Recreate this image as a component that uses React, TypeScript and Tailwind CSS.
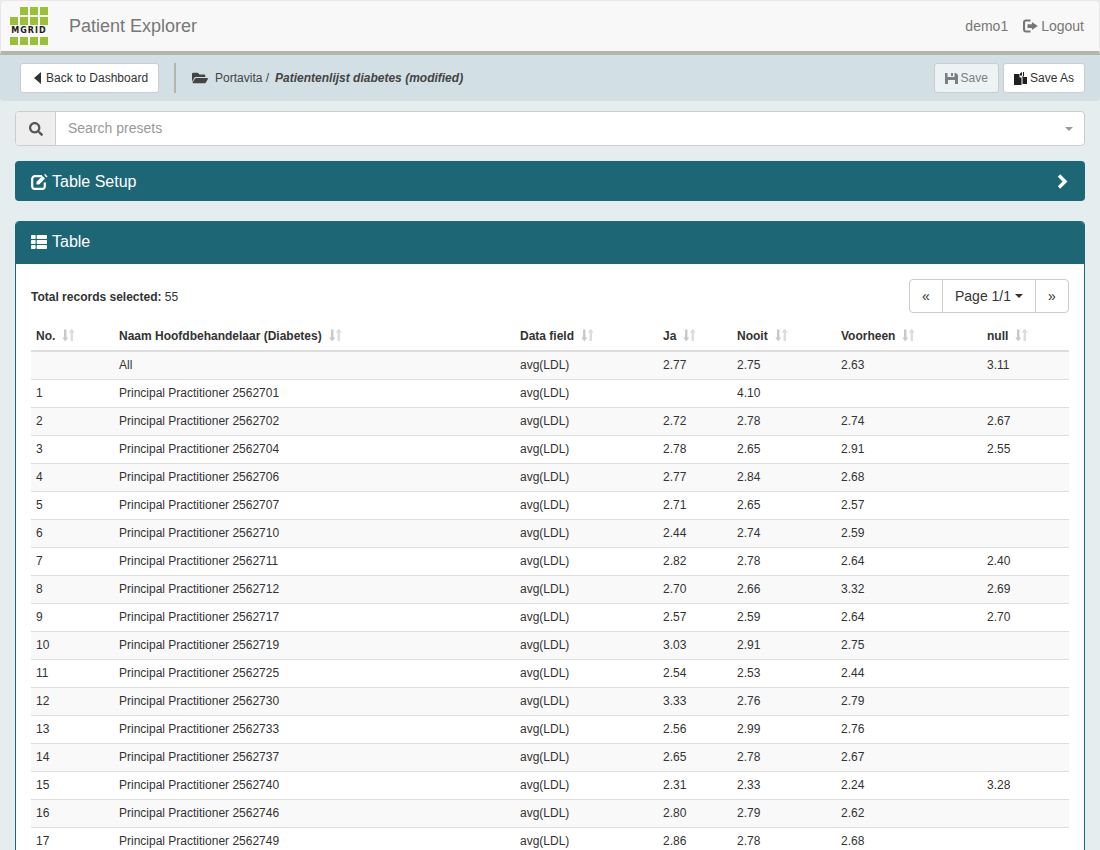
import type { ReactNode } from 'react'
import { FaFolderOpen, FaSearch, FaThList } from 'react-icons/fa'

type Row = [string, string, string, string, string, string]

const rows: Row[] = [
  ['', 'All', '2.77', '2.75', '2.63', '3.11'],
  ['1', 'Principal Practitioner 2562701', '', '4.10', '', ''],
  ['2', 'Principal Practitioner 2562702', '2.72', '2.78', '2.74', '2.67'],
  ['3', 'Principal Practitioner 2562704', '2.78', '2.65', '2.91', '2.55'],
  ['4', 'Principal Practitioner 2562706', '2.77', '2.84', '2.68', ''],
  ['5', 'Principal Practitioner 2562707', '2.71', '2.65', '2.57', ''],
  ['6', 'Principal Practitioner 2562710', '2.44', '2.74', '2.59', ''],
  ['7', 'Principal Practitioner 2562711', '2.82', '2.78', '2.64', '2.40'],
  ['8', 'Principal Practitioner 2562712', '2.70', '2.66', '3.32', '2.69'],
  ['9', 'Principal Practitioner 2562717', '2.57', '2.59', '2.64', '2.70'],
  ['10', 'Principal Practitioner 2562719', '3.03', '2.91', '2.75', ''],
  ['11', 'Principal Practitioner 2562725', '2.54', '2.53', '2.44', ''],
  ['12', 'Principal Practitioner 2562730', '3.33', '2.76', '2.79', ''],
  ['13', 'Principal Practitioner 2562733', '2.56', '2.99', '2.76', ''],
  ['14', 'Principal Practitioner 2562737', '2.65', '2.78', '2.67', ''],
  ['15', 'Principal Practitioner 2562740', '2.31', '2.33', '2.24', '3.28'],
  ['16', 'Principal Practitioner 2562746', '2.80', '2.79', '2.62', ''],
  ['17', 'Principal Practitioner 2562749', '2.86', '2.78', '2.68', ''],
]

const columns = ['No.', 'Naam Hoofdbehandelaar (Diabetes)', 'Data field', 'Ja', 'Nooit', 'Voorheen', 'null']

const LogoRow = ({ count }: { count: number }) => (
  <div className="flex justify-end gap-[2px]">
    {Array.from({ length: count }, (_, i) => (
      <span key={i} className="h-[8px] w-[8px] bg-[#9bbf35]" />
    ))}
  </div>
)

const Logo = () => (
  <div className="flex w-[38px] flex-col gap-[2px]">
    <LogoRow count={3} />
    <LogoRow count={4} />
    <div className="h-[8px] text-center font-['DejaVu_Sans'] text-[8px] font-bold leading-[8px] tracking-[1px] text-[#1c1c1c]">
      MGRID
    </div>
    <LogoRow count={4} />
  </div>
)

const LogoutIcon = () => (
  <svg viewBox="0 0 16 14" className="h-[14px] w-[15px]" fill="currentColor" aria-hidden="true">
    <path d="M3 0h5v2.2H3.4C2.7 2.2 2.2 2.7 2.2 3.4v7.2c0 .7.5 1.2 1.2 1.2H8V14H3c-1.7 0-3-1.3-3-3V3c0-1.7 1.3-3 3-3z" />
    <path d="M9.5 2.8 15.8 7l-6.3 4.2V9H4.8V5h4.7z" />
  </svg>
)

const SaveIcon = () => (
  <svg viewBox="0 0 13 13" className="h-[13px] w-[13px]" fill="currentColor" aria-hidden="true">
    <path fillRule="evenodd" d="M0 1h2.5v4h7V1H11l2 2v9H0zM3 8v4h7V8z" />
    <path d="M6 1h2v3H6z" />
  </svg>
)

const SaveAsIcon = () => (
  <svg viewBox="0 0 13 13" className="h-[13px] w-[13px]" fill="#231f20" aria-hidden="true">
    <path d="M0 2h5.5v3.5H7.5V13H0z" />
    <path d="M6 1.5 8 0v3.5H6zM9 0h1v4.5H8V4h1zM8.5 5H13v7H8.5z" />
  </svg>
)

const EditIcon = () => (
  <svg viewBox="0 0 17 16" className="h-[16px] w-[17px]" fill="none" aria-hidden="true">
    <path d="M11 2.2H3.8C2.4 2.2 1.2 3.4 1.2 4.8v7.4c0 1.4 1.2 2.6 2.6 2.6h7.4c1.4 0 2.6-1.2 2.6-2.6V8.5" stroke="white" strokeWidth="2.2" />
    <path d="M5.5 7.8 11.5 2 14 4.5 8.2 10.5H5.5z" fill="white" />
    <path d="M13 .8 14.2 0 16.6 2.4 15.4 3.6z" fill="white" />
  </svg>
)

const SortIcon = () => (
  <svg viewBox="0 0 14 14" className="ml-[7px] inline-block h-[14px] w-[13px] align-[-2px]" aria-hidden="true">
    <path d="M2.2 1h2.6v8.6h2L3.5 13.8.2 9.6h2z" fill="#c8c8cb" />
    <path d="M10.5.2 13.8 4.4h-2V13.4H9.2V4.4h-2z" fill="#dcdce0" />
  </svg>
)

const ToolbarButton = ({ children, disabled, className }: { children: ReactNode; disabled?: boolean; className?: string }) => (
  <button
    className={`flex h-[30px] items-center rounded-[3px] border border-[#ccc] text-[12px] ${
      disabled ? 'bg-[#edf3f4] text-[#7c7f80]' : 'bg-white text-[#333]'
    } ${className ?? ''}`}
  >
    {children}
  </button>
)

const App = () => (
  <div className="h-[850px] overflow-hidden bg-[#e6edef] font-['Liberation_Sans',sans-serif] text-[12px] text-[#333]">
    <header className="flex h-[55px] items-center justify-between rounded-t-[4px] border-x border-t border-b-[4px] border-x-[#e7e7e7] border-t-[#e7e7e7] border-b-[#b3b7a9] bg-[#f8f8f8] pl-[9px] pr-[15px]">
      <div className="flex items-center">
        <Logo />
        <span className="ml-[21px] text-[18px] text-[#777]">Patient Explorer</span>
      </div>
      <div className="flex items-center text-[14px] text-[#777]">
        <span>demo1</span>
        <span className="ml-[15px] flex items-center gap-[3px]">
          <LogoutIcon />
          Logout
        </span>
      </div>
    </header>

    <div className="flex h-[46px] items-center rounded-b-[4px] bg-[#d2e0e5] pl-[20px] pr-[15px]">
      <ToolbarButton className="pl-[13px] pr-[10px]">
        <svg viewBox="0 0 7 12" className="mr-[5px] h-[12px] w-[7px]" fill="#333" aria-hidden="true">
          <path d="M7 0v12L0 6z" />
        </svg>
        Back to Dashboard
      </ToolbarButton>
      <div className="ml-[15px] h-[30px] w-[2px] bg-[#b3b7a9]" />
      <FaFolderOpen className="ml-[16px] text-[16px] text-[#444]" />
      <span className="ml-[7px] text-[#444]">Portavita /</span>
      <span className="ml-[6px] font-bold italic text-[#444]">Patientenlijst diabetes (modified)</span>
      <div className="ml-auto flex gap-[4px]">
        <ToolbarButton disabled className="pl-[10px] pr-[10px]">
          <SaveIcon />
          <span className="ml-[3px]">Save</span>
        </ToolbarButton>
        <ToolbarButton className="pl-[10px] pr-[10px]">
          <span className="mr-[3px]">
            <SaveAsIcon />
          </span>
          Save As
        </ToolbarButton>
      </div>
    </div>

    <main className="px-[15px] pt-[10px]">
      <div className="flex h-[35px] overflow-hidden rounded-[4px] border border-[#ccc] bg-white">
        <div className="flex w-[40px] items-center justify-center border-r border-[#ccc] bg-[#eee] text-[#555]">
          <FaSearch className="text-[14px]" />
        </div>
        <div className="flex flex-1 items-center pl-[12px] pr-[11px] text-[14px] text-[#999]">
          Search presets
          <span className="ml-auto h-0 w-0 border-x-[4px] border-t-[4px] border-x-transparent border-t-[#999]" />
        </div>
      </div>

      <div className="mt-[15px] flex h-[40px] items-center justify-between rounded-[4px] bg-[#1c6675] pl-[16px] pr-[17px] pt-[1px] text-[16px] text-white">
        <div className="flex items-center gap-[4px]">
          <EditIcon />
          Table Setup
        </div>
        <svg viewBox="0 0 11 15" className="h-[15px] w-[11px]" fill="none" stroke="white" strokeWidth="3.4" aria-hidden="true">
          <path d="M2 1.5 8 7.5 2 13.5" />
        </svg>
      </div>

      <section className="mt-[20px] rounded-[4px] border border-[#1c6675] bg-white">
        <div className="flex h-[42px] items-center gap-[5px] rounded-t-[3px] bg-[#1c6675] pb-[2px] pl-[15px] text-[16px] text-white">
          <FaThList className="text-[16px]" />
          Table
        </div>
        <div className="px-[15px] pt-[15px]">
          <div className="flex items-center justify-between">
            <div className="pt-[2px]">
              <span className="font-bold">Total records selected:</span> 55
            </div>
            <div className="flex h-[34px] rounded-[4px] border border-[#ccc] text-[14px]">
              <span className="flex w-[32px] items-center justify-center">«</span>
              <span className="flex w-[94px] items-center justify-center gap-[4px] border-x border-[#ccc]">
                Page 1/1
                <span className="h-0 w-0 border-x-[4px] border-t-[4px] border-x-transparent border-t-[#333]" />
              </span>
              <span className="flex w-[32px] items-center justify-center">»</span>
            </div>
          </div>

          <table className="mt-[8px] w-full table-fixed border-collapse">
            <colgroup>
              <col className="w-[83px]" />
              <col className="w-[401px]" />
              <col className="w-[143px]" />
              <col className="w-[74px]" />
              <col className="w-[104px]" />
              <col className="w-[146px]" />
              <col />
            </colgroup>
            <thead>
              <tr className="h-[30px] border-b-2 border-[#ddd]">
                {columns.map((column) => (
                  <th key={column} className="px-[5px] text-left font-bold">
                    {column}
                    <SortIcon />
                  </th>
                ))}
              </tr>
            </thead>
            <tbody>
              {rows.map(([no, name, ja, nooit, voorheen, nullValue], index) => (
                <tr key={name} className={`h-[28px] border-b border-[#ddd] ${index % 2 === 0 ? 'bg-[#f9f9f9]' : ''}`}>
                  <td className="px-[5px]">{no}</td>
                  <td className="px-[5px]">{name}</td>
                  <td className="px-[5px]">avg(LDL)</td>
                  <td className="px-[5px]">{ja}</td>
                  <td className="px-[5px]">{nooit}</td>
                  <td className="px-[5px]">{voorheen}</td>
                  <td className="px-[5px]">{nullValue}</td>
                </tr>
              ))}
            </tbody>
          </table>
        </div>
      </section>
    </main>
  </div>
)

export default App
